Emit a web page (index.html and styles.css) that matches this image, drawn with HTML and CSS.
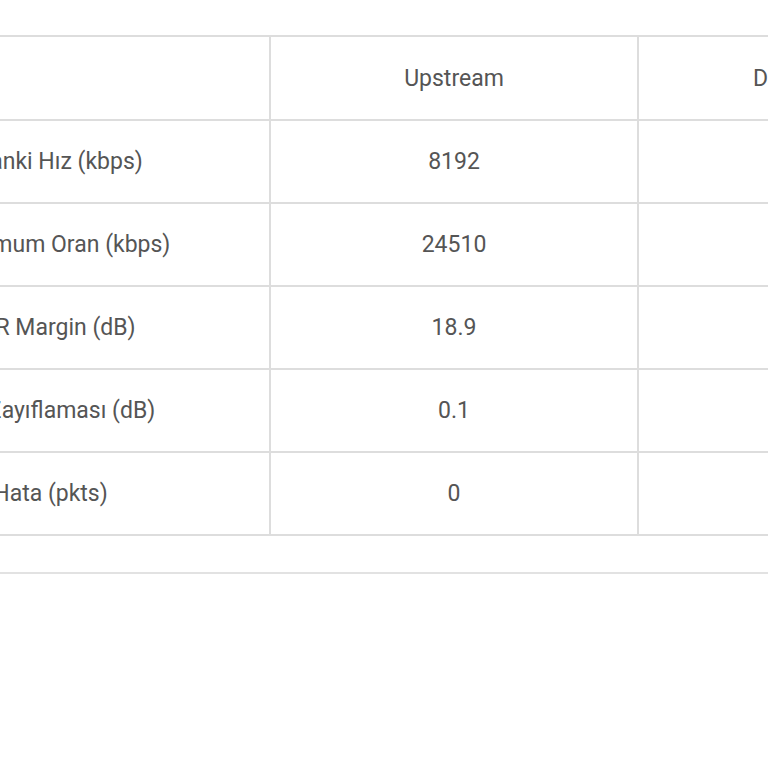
FILE: index.html
```html
<!DOCTYPE html>
<html lang="tr">
<head>
<meta charset="utf-8">
<title>DSL Durumu</title>
<link rel="stylesheet" href="styles.css">
</head>
<body>
<div class="page">
  <div class="scroller">
    <table class="stats">
      <thead>
        <tr class="head-row">
          <th class="label"></th>
          <th class="up">Upstream</th>
          <th class="down">Downstream</th>
        </tr>
      </thead>
      <tbody>
        <tr>
          <td class="label">Şu anki Hız (kbps)</td>
          <td class="up">8192</td>
          <td class="down">24576</td>
        </tr>
        <tr>
          <td class="label">Maksimum Oran (kbps)</td>
          <td class="up">24510</td>
          <td class="down">91256</td>
        </tr>
        <tr>
          <td class="label">SNR Margin (dB)</td>
          <td class="up">18.9</td>
          <td class="down">12.4</td>
        </tr>
        <tr>
          <td class="label">Hat Zayıflaması (dB)</td>
          <td class="up">0.1</td>
          <td class="down">9.2</td>
        </tr>
        <tr>
          <td class="label">Hata (pkts)</td>
          <td class="up">0</td>
          <td class="down">0</td>
        </tr>
      </tbody>
    </table>
  </div>
  <div class="separator"></div>
</div>
</body>
</html>
```

FILE: styles.css
```css
html, body {
  margin: 0;
  padding: 0;
  background: #ffffff;
}

body {
  width: 768px;
  height: 768px;
  overflow: hidden;
  font-family: Roboto, "Noto Sans", "Liberation Sans", sans-serif;
  color: #555555;
}

.page {
  padding-top: 35px;
}

.scroller {
  margin-left: -170px;
  width: 1161px;
}

.stats {
  border-collapse: collapse;
  table-layout: fixed;
  width: 1161px;
  font-size: 23px;
}

.stats th,
.stats td {
  border: 2px solid #dddddd;
  text-align: center;
  vertical-align: middle;
  font-weight: 400;
  padding: 0;
  height: 81px;
}

.stats .label {
  width: 437px;
}

.stats .up {
  width: 366px;
}

.stats .down {
  width: 358px;
}

.head-row th {
  height: 82px;
}

.separator {
  margin-top: 36px;
  border-top: 2px solid #e2e2e2;
}
```
